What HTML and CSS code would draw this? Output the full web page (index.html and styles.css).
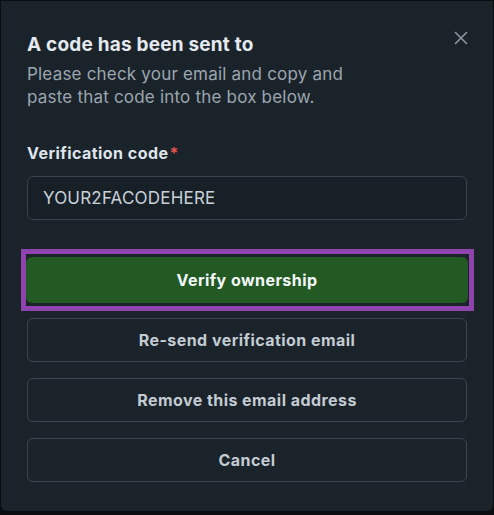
FILE: index.html
```html
<!DOCTYPE html>
<html lang="en">
<head>
<meta charset="utf-8">
<link rel="stylesheet" href="styles.css">
</head>
<body>
<div class="dialog">
  <div class="header">
    <h1 class="title">A code has been sent to</h1>
    <button class="close" aria-label="Close">
      <svg width="14" height="14" viewBox="0 0 14 14"><path d="M1.5 1.5 L12.5 12.5 M12.5 1.5 L1.5 12.5" stroke="#8d97a1" stroke-width="1.6" stroke-linecap="round" fill="none"/></svg>
    </button>
  </div>
  <p class="desc">Please check your email and copy and<br>paste that code into the box below.</p>
  <label class="label">Verification code<span class="req">*</span></label>
  <div class="input">YOUR2FACODEHERE</div>
  <div class="highlight">
    <button class="btn primary">Verify ownership</button>
  </div>
  <button class="btn secondary first">Re-send verification email</button>
  <button class="btn secondary">Remove this email address</button>
  <button class="btn secondary">Cancel</button>
</div>
</body>
</html>
```
FILE: styles.css
```css
html, body {
  margin: 0;
  padding: 0;
  background: #0a0d10;
}
body {
  width: 494px;
  height: 515px;
  padding: 1px 1px 0 1px;
  box-sizing: border-box;
  font-family: "Inter", "Noto Sans", sans-serif;
}
.dialog {
  background: #1b232a;
  height: 510px;
  border-radius: 0 0 6px 6px;
  padding: 27px 26px 0 26px;
  box-sizing: border-box;
  display: flex;
  flex-direction: column;
}
.header {
  display: flex;
  justify-content: space-between;
  align-items: flex-start;
}
.title {
  margin: 0;
  font-size: 19px;
  font-weight: 700;
  line-height: 34px;
  color: #e3e9ee;
  letter-spacing: 0.2px;
}
.close {
  background: none;
  border: none;
  padding: 0;
  margin: 3px -1px 0 0;
  width: 14px;
  height: 14px;
  display: flex;
}
.desc {
  margin: 0;
  font-size: 17px;
  line-height: 23px;
  padding-top: 1px;
  color: #9ba6b0;
  letter-spacing: 0.2px;
}
.label {
  margin-top: 32px;
  font-size: 16px;
  font-weight: 700;
  line-height: 24px;
  color: #dfe5eb;
  letter-spacing: 0.45px;
}
.req {
  color: #e5534b;
  margin-left: 1px;
}
.input {
  margin-top: 11px;
  height: 44px;
  box-sizing: border-box;
  border: 1px solid #39434d;
  border-radius: 6px;
  padding: 0 15px;
  display: flex;
  align-items: center;
  font-size: 17px;
  letter-spacing: 0.2px;
  color: #c9d1d9;
  background: #182027;
}
.highlight {
  margin: 29px -7px 0 -6px;
  border: 5px solid #8e43ad;
  padding: 3px 1px 3px 0;
}
.btn {
  display: block;
  width: 100%;
  height: 44px;
  border-radius: 6px;
  font-family: "Inter", "Noto Sans", sans-serif;
  font-size: 16px;
  font-weight: 700;
  letter-spacing: 0.45px;
  cursor: pointer;
}
.primary {
  height: 46px;
  background: #235a24;
  border: none;
  color: #f4f7f9;
}
.secondary {
  background: #1b232a;
  border: 1px solid #3b454f;
  color: #c3cbd3;
  margin-top: 16px;
}
.secondary.first {
  margin-top: 7px;
}
```
